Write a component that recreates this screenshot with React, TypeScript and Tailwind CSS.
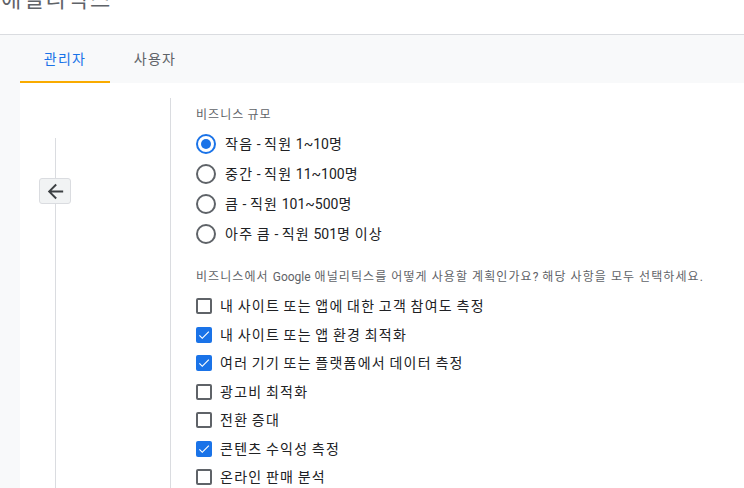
import React from 'react';

const FONT = 'font-[Roboto,"Noto_Sans_CJK_KR",sans-serif]';

const K: React.FC<{ children: string }> = ({ children }) => (
  <>
    {children.split(/([\uac00-\ud7a3]+)/).map((part, i) =>
      /[\uac00-\ud7a3]/.test(part) ? (
        <span key={i} className="tracking-[0.09em]">
          {part}
        </span>
      ) : (
        <React.Fragment key={i}>{part}</React.Fragment>
      )
    )}
  </>
);

const sizes = [
  { label: '작음 - 직원 1~10명', checked: true },
  { label: '중간 - 직원 11~100명', checked: false },
  { label: '큼 - 직원 101~500명', checked: false },
  { label: '아주 큼 - 직원 501명 이상', checked: false },
];

const uses = [
  { label: '내 사이트 또는 앱에 대한 고객 참여도 측정', checked: false },
  { label: '내 사이트 또는 앱 환경 최적화', checked: true },
  { label: '여러 기기 또는 플랫폼에서 데이터 측정', checked: true },
  { label: '광고비 최적화', checked: false },
  { label: '전환 증대', checked: false },
  { label: '콘텐츠 수익성 측정', checked: true },
  { label: '온라인 판매 분석', checked: false },
];

const Radio: React.FC<{ checked: boolean }> = ({ checked }) => (
  <span
    className={`w-[20px] h-[20px] rounded-full border-2 flex items-center justify-center shrink-0 ${
      checked ? 'border-[#1a73e8]' : 'border-[#5f6368]'
    }`}
  >
    {checked && <span className="w-[10px] h-[10px] rounded-full bg-[#1a73e8]" />}
  </span>
);

const Checkbox: React.FC<{ checked: boolean }> = ({ checked }) =>
  checked ? (
    <span className="w-[16px] h-[16px] rounded-[2px] bg-[#1a73e8] flex items-center justify-center shrink-0">
      <svg viewBox="0 0 24 24" className="w-[14px] h-[14px]" fill="white">
        <path d="M9 16.17L4.83 12l-1.42 1.41L9 19 21 7l-1.41-1.41z" />
      </svg>
    </span>
  ) : (
    <span className="w-[16px] h-[16px] rounded-[2px] border-2 border-[#5f6368] shrink-0" />
  );

export default function App() {
  return (
    <div className={`w-[744px] h-[488px] overflow-hidden bg-white flex flex-col ${FONT}`}>
      {/* Header */}
      <div className="h-[35px] shrink-0 border-b border-[#dadce0] overflow-hidden">
        <div className="text-[22px] leading-[28px] text-[#5f6368] mt-[-14px] ml-[1px] whitespace-nowrap">
          <K>애널리틱스</K>
        </div>
      </div>

      {/* Tabs + panel */}
      <div className="flex-1 bg-[#f8f9fa] flex flex-col min-h-0">
        <div className="h-[48px] shrink-0 flex pl-[20px]">
          <div className="w-[90px] flex items-center justify-center text-sm text-[#1a73e8] border-b-2 border-[#f9ab00] pt-[1px]">
            <K>관리자</K>
          </div>
          <div className="w-[90px] flex items-center justify-center text-sm text-[#5f6368] pb-[1px]">
            <K>사용자</K>
          </div>
        </div>

        <div className="flex-1 ml-[20px] bg-white flex min-h-0">
          {/* Left rail */}
          <div className="w-[150px] shrink-0 relative">
            <div className="absolute left-[35px] top-[55px] bottom-0 w-px bg-[#dadce0]" />
            <button className="absolute left-[19px] top-[95px] w-[32px] h-[26px] rounded-[3px] border border-[#dadce0] bg-[#f1f3f4] flex items-center justify-center">
              <svg viewBox="0 0 24 24" className="w-[23px] h-[23px]" fill="#3c4043">
                <path d="M20 11H7.83l5.59-5.59L12 4l-8 8 8 8 1.41-1.41L7.83 13H20v-2z" />
              </svg>
            </button>
          </div>

          {/* Content */}
          <div className="flex-1 mt-[15px] border-l border-[#dadce0] pl-[25px] pt-[9px] whitespace-nowrap">
            <div className="text-xs leading-[16px] text-[#5f6368]">
              <K>비즈니스 규모</K>
            </div>
            <div className="mt-[6px]">
              {sizes.map((s) => (
                <div key={s.label} className="h-[30px] flex items-center gap-[9px]">
                  <Radio checked={s.checked} />
                  <span className="text-sm text-[#202124]">
                    <K>{s.label}</K>
                  </span>
                </div>
              ))}
            </div>
            <div className="mt-[20px] text-xs leading-[16px] text-[#5f6368] [word-spacing:1px]">
              <K>비즈니스에서 Google 애널리틱스를 어떻게 사용할 계획인가요? 해당 사항을 모두 선택하세요.</K>
            </div>
            <div className="mt-[7px]">
              {uses.map((u) => (
                <div key={u.label} className="h-[28.5px] flex items-center gap-[8px]">
                  <Checkbox checked={u.checked} />
                  <span className="text-sm text-[#202124]">
                    <K>{u.label}</K>
                  </span>
                </div>
              ))}
            </div>
          </div>
        </div>
      </div>
    </div>
  );
}
